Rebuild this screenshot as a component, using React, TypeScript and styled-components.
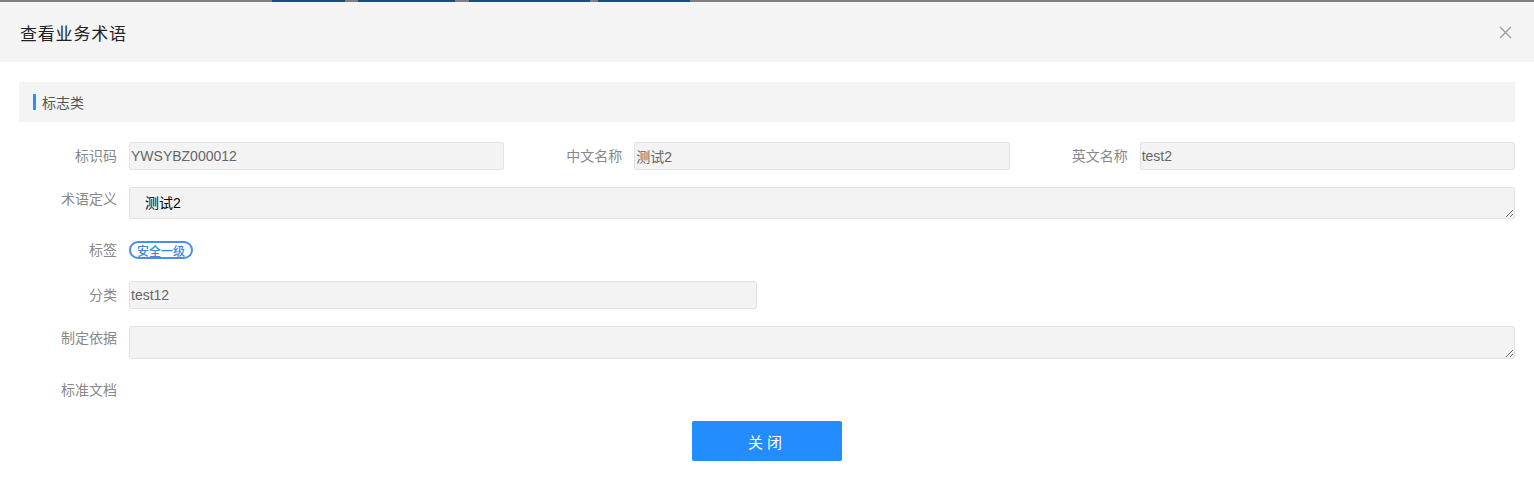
import React, { FC } from 'react';
import styled, { createGlobalStyle } from 'styled-components';

const GlobalStyle = createGlobalStyle`
  html, body {
    margin: 0;
    padding: 0;
    background: #fff;
    overflow: hidden;
  }
  body {
    font-family: "Liberation Sans", "Noto Sans CJK SC", sans-serif;
    color: #333;
  }
`;

const Page = styled.div`
  width: 1534px;
  height: 480px;
  display: flex;
  flex-direction: column;
  background: #fff;
`;

// strip of the page behind the dialog, peeking out at the very top
const BackStrip = styled.div`
  height: 2px;
  display: flex;
  background: #808080;
  padding-left: 272px;
  gap: 13px;
`;

const BackTab = styled.div<{ $w: number; $ml?: number }>`
  width: ${({ $w }) => $w}px;
  margin-left: ${({ $ml }) => $ml || 0}px;
  background: #1d4a80;
`;

const Header = styled.div`
  height: 60px;
  display: flex;
  align-items: center;
  justify-content: space-between;
  padding: 0 22px 0 20px;
  background: #f4f4f4;
`;

const Title = styled.div`
  font-size: 17px;
  color: #222;
  letter-spacing: 0.8px;
`;

const CloseButton = styled.button`
  border: 0;
  background: transparent;
  padding: 0;
  width: 14px;
  height: 14px;
  display: flex;
  align-items: center;
  justify-content: center;
  cursor: pointer;
`;

const Body = styled.div`
  padding: 20px 19px 0;
  display: flex;
  flex-direction: column;
`;

const SectionHead = styled.div`
  height: 40px;
  display: flex;
  align-items: center;
  padding-left: 14px;
  gap: 6px;
  background: #f4f4f4;
  font-size: 14px;
  color: #555;
`;

const SectionBar = styled.span`
  width: 3px;
  height: 16px;
  background: #2a8ff7;
`;

const Form = styled.div`
  margin-top: 20px;
  display: flex;
  flex-direction: column;
  gap: 17px;
`;

const Grid3 = styled.div`
  display: grid;
  grid-template-columns: repeat(3, 1fr);
  column-gap: 20px;
`;

const Field = styled.div<{ $top?: boolean }>`
  display: flex;
  align-items: ${({ $top }) => ($top ? 'flex-start' : 'center')};
  min-height: 28px;
`;

const Label = styled.label<{ $top?: boolean }>`
  width: 110px;
  flex: none;
  box-sizing: border-box;
  padding-right: 12px;
  text-align: right;
  font-size: 14px;
  color: #888;
  line-height: ${({ $top }) => ($top ? '24px' : '28px')};
`;

const Input = styled.input<{ $w?: number }>`
  box-sizing: border-box;
  height: 28px;
  ${({ $w }) => ($w ? `width: ${$w}px;` : 'flex: 1; min-width: 0;')}
  border: 1px solid #e2e2e2;
  border-radius: 2px;
  background: #f3f3f3;
  padding: 0 1px;
  font-family: inherit;
  font-size: 14px;
  color: #666;
  outline: none;
`;

const TextArea = styled.textarea<{ $h: number }>`
  box-sizing: border-box;
  flex: 1;
  height: ${({ $h }) => $h}px;
  border: 1px solid #e2e2e2;
  border-radius: 2px;
  background: #f3f3f3;
  padding: 5px 15px;
  font-family: inherit;
  font-size: 14px;
  line-height: 20px;
  color: #000;
  resize: vertical;
  outline: none;
`;

const Tag = styled.span`
  display: inline-flex;
  align-items: center;
  height: 18px;
  box-sizing: border-box;
  padding: 0 6px;
  border: 2px solid #4a90e2;
  border-radius: 9px;
  font-size: 12px;
  font-weight: 500;
  color: #3a87dd;
`;

const Footer = styled.div`
  margin-top: 17px;
  display: flex;
  justify-content: center;
`;

const PrimaryButton = styled.button`
  width: 150px;
  height: 40px;
  border: 0;
  border-radius: 2px;
  background: #238cfe;
  color: #fff;
  font-family: inherit;
  font-size: 15px;
  letter-spacing: 4px;
  cursor: pointer;
`;

const CloseIcon: FC = () => (
  <svg width="13" height="13" viewBox="0 0 13 13">
    <path d="M1 1L12 12M12 1L1 12" stroke="#999" strokeWidth="1.2" fill="none" />
  </svg>
);

const App: FC = () => (
  <Page>
    <GlobalStyle />
    <BackStrip>
      <BackTab $w={73} />
      <BackTab $w={97} />
      <BackTab $w={121} $ml={1} />
      <BackTab $w={92} $ml={-5} />
    </BackStrip>
    <Header>
      <Title>查看业务术语</Title>
      <CloseButton aria-label="关闭">
        <CloseIcon />
      </CloseButton>
    </Header>
    <Body>
      <SectionHead>
        <SectionBar />
        标志类
      </SectionHead>
      <Form>
        <Grid3>
          <Field>
            <Label>标识码</Label>
            <Input readOnly value="YWSYBZ000012" />
          </Field>
          <Field>
            <Label>中文名称</Label>
            <Input readOnly value="测试2" />
          </Field>
          <Field>
            <Label>英文名称</Label>
            <Input readOnly value="test2" />
          </Field>
        </Grid3>
        <Field $top>
          <Label $top>术语定义</Label>
          <TextArea $h={32} readOnly value="测试2" />
        </Field>
        <Field>
          <Label>标签</Label>
          <Tag>安全一级</Tag>
        </Field>
        <Field>
          <Label>分类</Label>
          <Input $w={628} readOnly value="test12" />
        </Field>
        <Field $top>
          <Label $top>制定依据</Label>
          <TextArea $h={33} readOnly value="" />
        </Field>
        <Field>
          <Label>标准文档</Label>
        </Field>
      </Form>
      <Footer>
        <PrimaryButton>关闭</PrimaryButton>
      </Footer>
    </Body>
  </Page>
);

export default App;
